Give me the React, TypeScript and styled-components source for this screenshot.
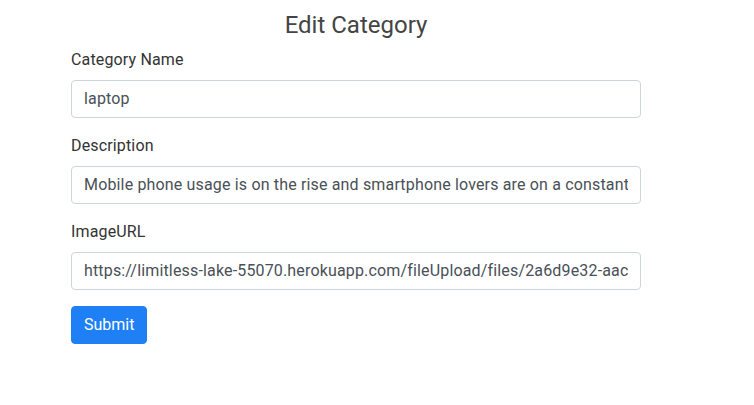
import React from "react";
import styled, { createGlobalStyle } from "styled-components";

const Global = createGlobalStyle`
  body {
    margin: 0;
    background: #fff;
    font-family: Roboto, "Helvetica Neue", Arial, sans-serif;
    color: #212529;
  }
  * { box-sizing: border-box; }
`;

const Page = styled.div`
  padding: 11px 0 0 71px;
`;

const Form = styled.form`
  width: 570px;
  display: flex;
  flex-direction: column;
`;

const Title = styled.h4`
  margin: 0 0 8px;
  text-align: center;
  font-size: 24px;
  font-weight: 400;
  line-height: 1.2;
  color: #444;
`;

const Group = styled.div`
  display: flex;
  flex-direction: column;
  margin-bottom: 16px;
`;

const Label = styled.label`
  font-size: 16px;
  line-height: 24px;
  margin-bottom: 8px;
  letter-spacing: 0.15px;
  color: #333;
`;

const Input = styled.input`
  height: 38px;
  width: 100%;
  padding: 6px 12px;
  font-family: inherit;
  font-size: 16px;
  line-height: 24px;
  letter-spacing: 0.16px;
  color: #495057;
  background: #fff;
  border: 1px solid #ced4da;
  border-radius: 4px;
  outline: none;
`;

const Button = styled.button`
  align-self: flex-start;
  height: 38px;
  padding: 6px 12px;
  font-family: inherit;
  font-size: 16px;
  line-height: 24px;
  color: #fff;
  background: #1f7ff5;
  border: 1px solid #1f7ff5;
  border-radius: 4px;
`;

const fields = [
  { label: "Category Name", value: "laptop" },
  {
    label: "Description",
    value:
      "Mobile phone usage is on the rise and smartphone lovers are on a constant lookout for the latest models",
  },
  {
    label: "ImageURL",
    value:
      "https://limitless-lake-55070.herokuapp.com/fileUpload/files/2a6d9e32-aacf-4b1e-9c1d-7f3a2b8e5d10.jpg",
  },
];

export default function App() {
  return (
    <>
      <Global />
      <Page>
        <Form onSubmit={(e) => e.preventDefault()}>
          <Title>Edit Category</Title>
          {fields.map((f) => (
            <Group key={f.label}>
              <Label>{f.label}</Label>
              <Input defaultValue={f.value} />
            </Group>
          ))}
          <Button type="submit">Submit</Button>
        </Form>
      </Page>
    </>
  );
}
